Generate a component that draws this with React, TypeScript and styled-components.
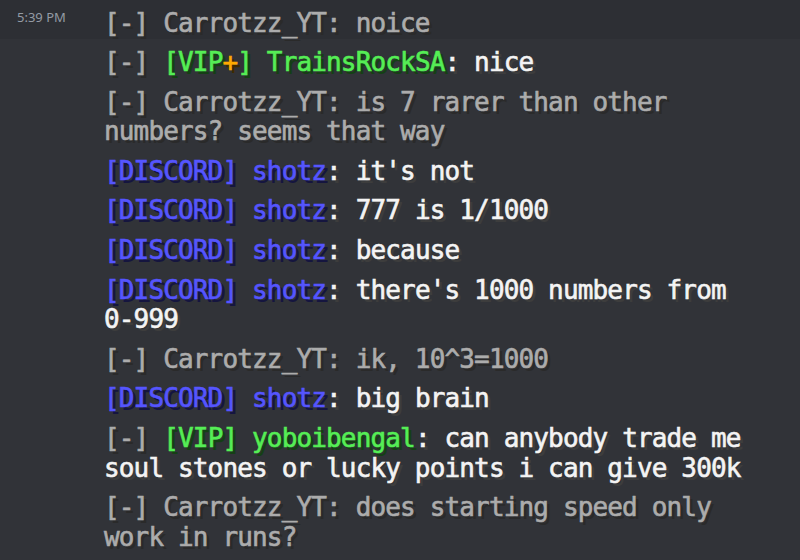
import React from "react";
import styled, { createGlobalStyle } from "styled-components";

type Tone = "gray" | "white" | "green" | "blue" | "gold";

const palette: Record<Tone, { fg: string; shadow: string }> = {
  gray: { fg: "#acacac", shadow: "#2a2a2a" },
  white: { fg: "#f4f4f4", shadow: "#3d3d3d" },
  green: { fg: "#55ee55", shadow: "#153f15" },
  blue: { fg: "#5555ff", shadow: "#15153f" },
  gold: { fg: "#ffaa00", shadow: "#3f2a00" },
};

type Segment = { text: string; tone: Tone };
type Message = { lines: Segment[][]; hovered?: boolean; time?: string };

const GlobalStyle = createGlobalStyle`
  html, body {
    margin: 0;
    padding: 0;
    background: #313338;
    overflow: hidden;
  }
  body {
    width: 800px;
    height: 560px;
  }
`;

const Chat = styled.div`
  display: flex;
  flex-direction: column;
  margin-top: -1px;
`;

const Row = styled.div<{ $hovered?: boolean }>`
  display: grid;
  grid-template-columns: 104px 1fr;
  padding: 9.5px 0 0.5px;
  background: ${(p) => (p.$hovered ? "#2d2f34" : "transparent")};
`;

const Gutter = styled.div`
  padding-left: 17px;
`;

const Timestamp = styled.span`
  display: block;
  margin-top: 0;
  font-family: "Noto Sans", sans-serif;
  font-size: 13px;
  line-height: 16px;
  color: #949ba4;
  white-space: nowrap;
`;

const Body = styled.div`
  font-family: "DejaVu Sans Mono", monospace;
  font-size: 26px;
  font-weight: 400;
  letter-spacing: -0.85px;
  line-height: 29.6px;
  white-space: pre;
`;

const Line = styled.div``;

const Seg = styled.span<{ $tone: Tone }>`
  color: ${(p) => palette[p.$tone].fg};
  -webkit-text-stroke: 0.6px ${(p) => palette[p.$tone].fg};
  text-shadow: 3px 3px 0 ${(p) => palette[p.$tone].shadow};
`;

const g = (text: string): Segment => ({ text, tone: "gray" });
const w = (text: string): Segment => ({ text, tone: "white" });
const gr = (text: string): Segment => ({ text, tone: "green" });
const b = (text: string): Segment => ({ text, tone: "blue" });
const au = (text: string): Segment => ({ text, tone: "gold" });

const messages: Message[] = [
  { lines: [[g("[-] Carrotzz_YT: noice")]], hovered: true, time: "5:39 PM" },
  { lines: [[g("[-] "), gr("[VIP"), au("+"), gr("] TrainsRockSA"), w(": nice")]] },
  {
    lines: [
      [g("[-] Carrotzz_YT: is 7 rarer than other")],
      [g("numbers? seems that way")],
    ],
  },
  { lines: [[b("[DISCORD] shotz"), w(": it's not")]] },
  { lines: [[b("[DISCORD] shotz"), w(": 777 is 1/1000")]] },
  { lines: [[b("[DISCORD] shotz"), w(": because")]] },
  {
    lines: [
      [b("[DISCORD] shotz"), w(": there's 1000 numbers from")],
      [w("0-999")],
    ],
  },
  { lines: [[g("[-] Carrotzz_YT: ik, 10^3=1000")]] },
  { lines: [[b("[DISCORD] shotz"), w(": big brain")]] },
  {
    lines: [
      [g("[-] "), gr("[VIP] yoboibengal"), w(": can anybody trade me")],
      [w("soul stones or lucky points i can give 300k")],
    ],
  },
  {
    lines: [
      [g("[-] Carrotzz_YT: does starting speed only")],
      [g("work in runs?")],
    ],
  },
];

export default function App() {
  return (
    <>
      <GlobalStyle />
      <Chat>
        {messages.map((m, i) => (
          <Row key={i} $hovered={m.hovered}>
            <Gutter>{m.time && <Timestamp>{m.time}</Timestamp>}</Gutter>
            <Body>
              {m.lines.map((line, j) => (
                <Line key={j}>
                  {line.map((s, k) => (
                    <Seg key={k} $tone={s.tone}>
                      {s.text}
                    </Seg>
                  ))}
                </Line>
              ))}
            </Body>
          </Row>
        ))}
      </Chat>
    </>
  );
}
